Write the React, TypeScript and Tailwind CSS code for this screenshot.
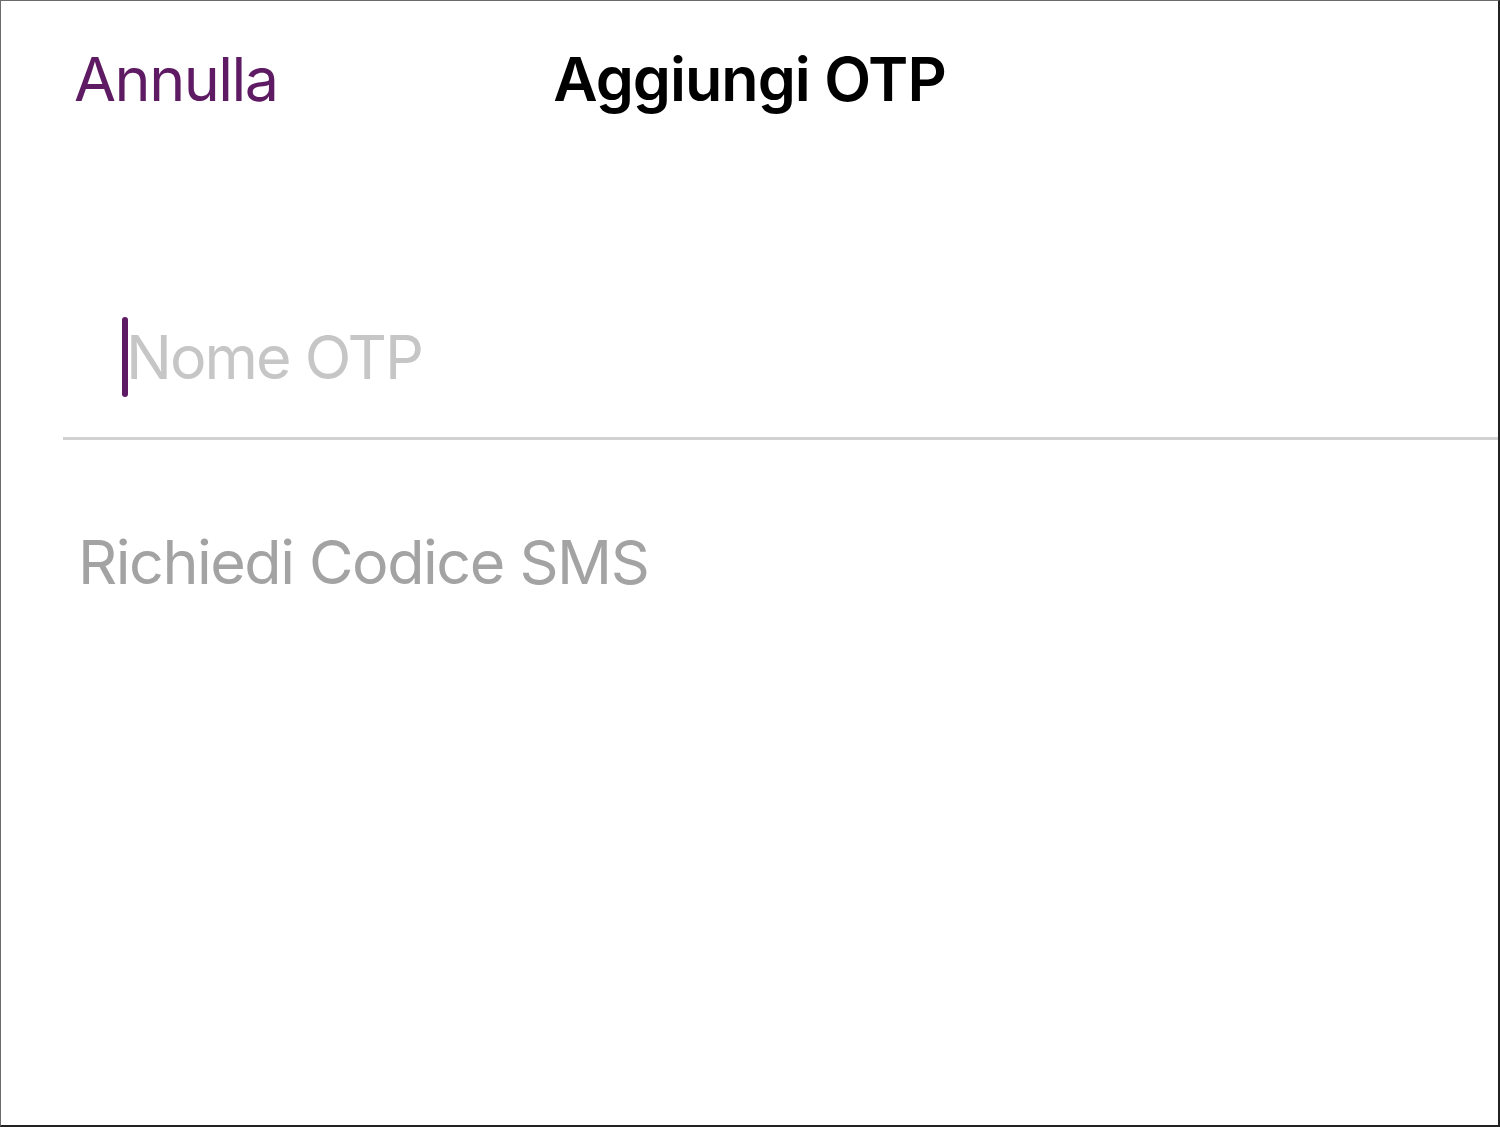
export default function App() {
  return (
    <div className="h-[1127px] w-[1500px] overflow-hidden border-t border-l border-t-[#6b6b6b] border-l-[#6b6b6b] border-r-2 border-b-2 border-r-[#222] border-b-[#222] bg-white font-['Inter',sans-serif]">
      <header className="relative flex h-[156px] items-start px-[73px] pt-[38px]">
        <button className="text-[61px] leading-[80px] tracking-[-1.5px] text-[#5e1a63]">
          Annulla
        </button>
        <h1 className="absolute left-0 right-0 top-[38px] text-center text-[61px] font-semibold leading-[80px] tracking-[-1px] text-black">
          Aggiungi OTP
        </h1>
      </header>

      <div className="ml-[62px] border-b-[3px] border-[#d2d2d2] pt-[160px] pb-[40px]">
        <div className="flex h-[80px] items-center pl-[59px]">
          <span className="h-[80px] w-[6px] rounded-full bg-[#5e1a63]" />
          <span className="-ml-[2px] text-[61px] leading-[80px] tracking-[-2px] text-[#c6c6c6]">
            Nome OTP
          </span>
        </div>
      </div>

      <div className="px-[77px] pt-[82px]">
        <button className="text-[61px] leading-[80px] tracking-[-1.5px] text-[#a3a3a3]">
          Richiedi Codice SMS
        </button>
      </div>
    </div>
  );
}
